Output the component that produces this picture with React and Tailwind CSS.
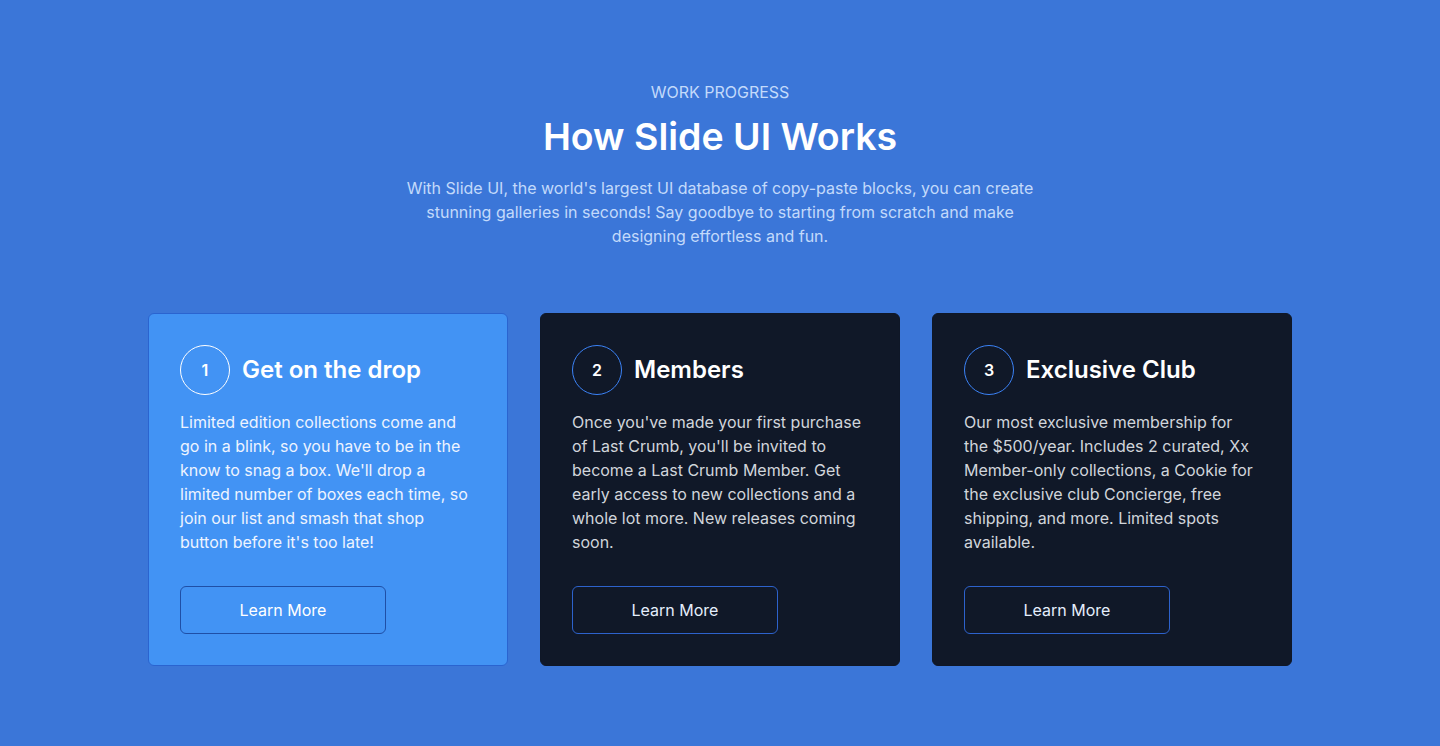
export default function App() {
  const cards = [
    {
      n: "1",
      title: "Get on the drop",
      body: "Limited edition collections come and go in a blink, so you have to be in the know to snag a box. We'll drop a limited number of boxes each time, so join our list and smash that shop button before it's too late!",
      active: true,
    },
    {
      n: "2",
      title: "Members",
      body: "Once you've made your first purchase of Last Crumb, you'll be invited to become a Last Crumb Member. Get early access to new collections and a whole lot more. New releases coming soon.",
      active: false,
    },
    {
      n: "3",
      title: "Exclusive Club",
      body: "Our most exclusive membership for the $500/year. Includes 2 curated, Xx Member-only collections, a Cookie for the exclusive club Concierge, free shipping, and more. Limited spots available.",
      active: false,
    },
  ];
  return (
    <div
      className="min-h-[746px] w-full bg-[#3b76d8] pt-20 pb-20"
      style={{ fontFamily: "Inter, 'Noto Sans', sans-serif" }}
    >
      <div className="mx-auto flex max-w-[1144px] flex-col items-center text-center">
        <p className="text-base leading-6 text-[#c3dafb]">WORK PROGRESS</p>
        <h2 className="mt-[13px] text-[37.5px] leading-10 font-semibold text-white">
          How Slide UI Works
        </h2>
        <p className="mt-[19px] max-w-[640px] text-base leading-6 text-[#c3dafb]">
          With Slide UI, the world's largest UI database of copy-paste blocks, you can create stunning galleries in seconds! Say goodbye to starting from scratch and make designing effortless and fun.
        </p>
      </div>
      <div className="mx-auto mt-[65px] grid max-w-[1144px] grid-cols-3 gap-8">
        {cards.map((c) => (
          <div
            key={c.n}
            className={
              c.active
                ? "flex flex-col rounded-md border border-[#2a64d0] bg-[#4293f4] p-[31px]"
                : "flex flex-col rounded-md border border-[#0f1727] bg-[#101828] p-[31px]"
            }
          >
            <div className="flex items-center gap-3">
              <div
                className={
                  c.active
                    ? "flex h-[50px] w-[50px] items-center justify-center rounded-full border border-white text-base font-semibold text-white"
                    : "flex h-[50px] w-[50px] items-center justify-center rounded-full border border-[#3b82f6] text-base font-semibold text-white"
                }
              >
                {c.n}
              </div>
              <h3 className="text-2xl leading-8 font-semibold text-white">{c.title}</h3>
            </div>
            <p
              className={
                c.active
                  ? "mt-[15px] text-base leading-6 text-[#eef4ff]"
                  : "mt-[15px] text-base leading-6 text-[#d1d5db]"
              }
            >
              {c.body}
            </p>
            <button
              className={
                c.active
                  ? "mt-8 h-12 w-[206px] rounded-md border border-[#1f4fa6] text-base text-white"
                  : "mt-8 h-12 w-[206px] rounded-md border border-[#2d62cc] text-base text-[#e5eefc]"
              }
            >
              Learn More
            </button>
          </div>
        ))}
      </div>
    </div>
  );
}
